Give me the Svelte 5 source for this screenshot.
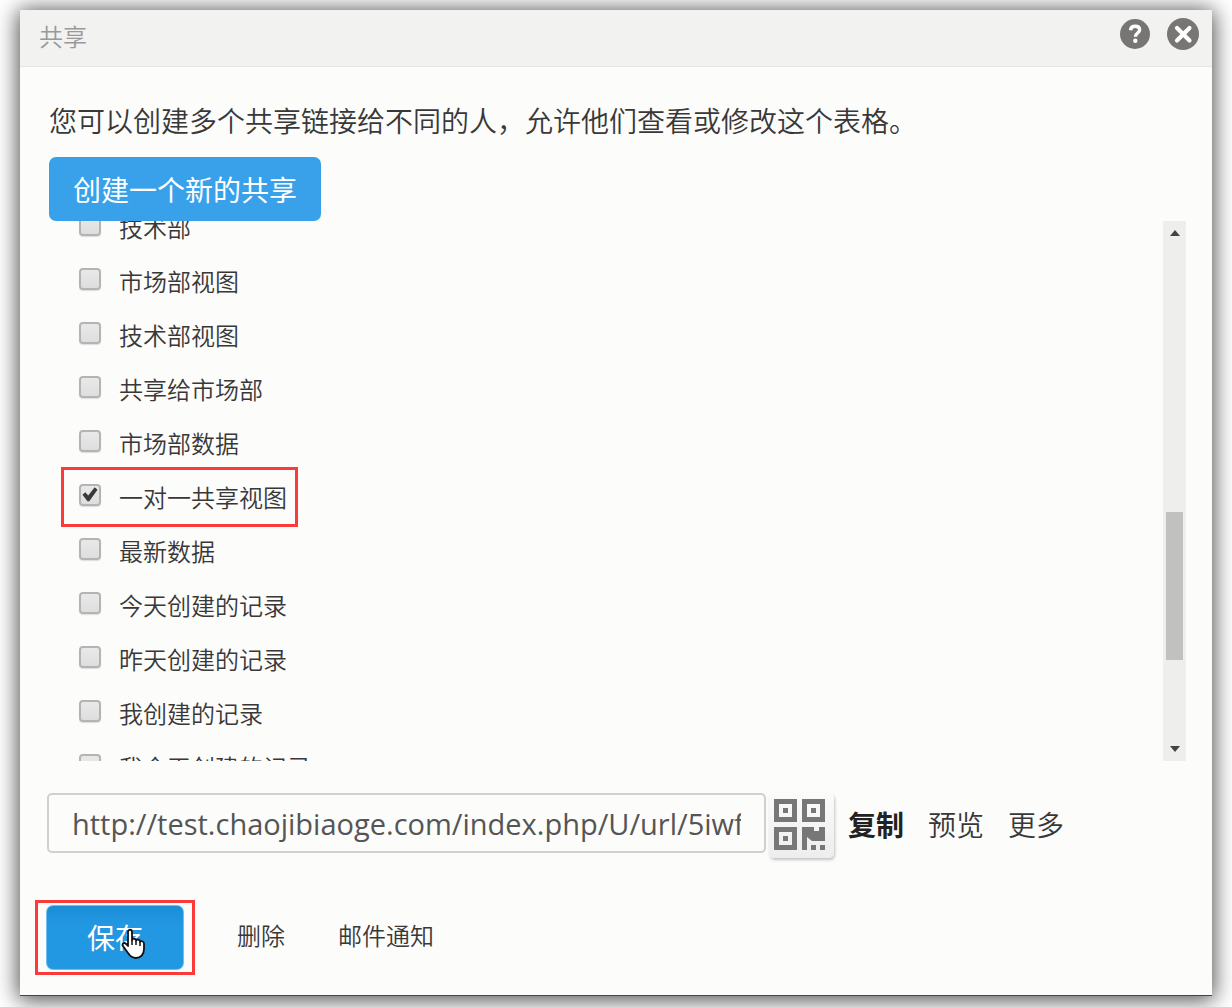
<script>
  let views = $state([
    { name: '技术部', checked: false },
    { name: '市场部视图', checked: false },
    { name: '技术部视图', checked: false },
    { name: '共享给市场部', checked: false },
    { name: '市场部数据', checked: false },
    { name: '一对一共享视图', checked: true, marked: true },
    { name: '最新数据', checked: false },
    { name: '今天创建的记录', checked: false },
    { name: '昨天创建的记录', checked: false },
    { name: '我创建的记录', checked: false },
    { name: '我今天创建的记录', checked: false }
  ]);
  let url = $state('http://test.chaojibiaoge.com/index.php/U/url/5iwf');
</script>

<main class="dialog">
  <header>
    <h1>共享</h1>
    <div class="tools">
      <button class="icon" aria-label="帮助">
        <svg width="30" height="30" viewBox="0 0 30 30">
          <circle cx="15" cy="15" r="15" fill="#777675" />
          <path d="M10.500 11.200c.3-2.700 2.100-3.900 4.600-3.900 2.700 0 4.500 1.400 4.500 3.600 0 3.200-4.100 3-4.200 6.800" fill="none" stroke="#fff" stroke-width="3.400" />
          <circle cx="15.300" cy="21.800" r="2.200" fill="#fff" />
        </svg>
      </button>
      <button class="icon" aria-label="关闭">
        <svg width="32" height="32" viewBox="0 0 32 32">
          <circle cx="16" cy="16" r="16" fill="#777675" />
          <path d="M10 10l12.500 12.500M22.500 10L10 22.500" fill="none" stroke="#fff" stroke-width="4.200" stroke-linecap="round" />
        </svg>
      </button>
    </div>
  </header>

  <section class="content">
    <p class="intro">您可以创建多个共享链接给不同的人，允许他们查看或修改这个表格。</p>
    <button class="primary create">创建一个新的共享</button>

    <div class="viewport">
      <ul>
        {#each views as view}
          <li>
            <label class:marked={view.marked}>
              <input type="checkbox" bind:checked={view.checked} />
              <span>{view.name}</span>
            </label>
          </li>
        {/each}
      </ul>
      <div class="scrollbar" aria-hidden="true">
        <svg width="10" height="6" viewBox="0 0 10 6"><path d="M0 6L5 0l5 6z" fill="#444" /></svg>
        <div class="track"><div class="thumb"></div></div>
        <svg width="10" height="6" viewBox="0 0 10 6"><path d="M0 0h10L5 6z" fill="#444" /></svg>
      </div>
    </div>

    <div class="link-row">
      <input class="url" type="text" aria-label="共享链接" bind:value={url} />
      <button class="qr" aria-label="二维码">
        <svg width="52" height="52" viewBox="0 0 52 52" fill="#777">
          <g fill="none" stroke="#777" stroke-width="5">
            <path d="M2.500 2.500h18v18h-18zM30.500 2.500h18v18h-18zM2.500 30.500h18v18h-18z" />
          </g>
          <path d="M9 9h5v5H9zM37 9h5v5h-5zM9 37h5v5H9zM28 28h12v4h5v-4h6v14H38l-5-4v13h-5zM37 46h5v5h-5zM46 46h5v5h-5z" />
        </svg>
      </button>
      <a href="#copy" class="copy">复制</a>
      <a href="#preview">预览</a>
      <a href="#more">更多</a>
    </div>

    <footer>
      <div class="save-wrap">
        <button class="primary save">保存</button>
        <svg class="pointer" width="24" height="32" viewBox="0 0 24 32">
          <path d="M7 18V4c0-3 4-3 4 0v8c1-2 4-1.500 4 .5 1-1.500 4-1 4 1.200 1.500-1.200 4 0 4 2V21c0 5-3 9-8 9-4 0-6-2-8-5l-5-7c-1.500-2 1-4 3-2.200z" fill="#fff" stroke="#111" stroke-width="1.800" stroke-linejoin="round" />
          <path d="M11 12v5M15 13v4M19 14v4" stroke="#111" stroke-width="1.500" />
        </svg>
      </div>
      <a href="#delete">删除</a>
      <a href="#mail">邮件通知</a>
    </footer>
  </section>
</main>

<style>
  :global(body) {
    background: #fff;
  }
  :global(#app) {
    display: flow-root;
  }
  .dialog {
    box-sizing: border-box;
    margin: 10px 20px 11px;
    background: #fcfcfb;
    border-bottom: 1px solid #444;
    border-radius: 2px 2px 0 0;
    box-shadow: 0 2px 22px 2px rgba(0, 0, 0, 0.7);
    color: #383838;
    font-family: "Noto Sans CJK SC", sans-serif;
    font-weight: 350;
  }
  header {
    display: flex;
    justify-content: space-between;
    align-items: center;
    box-sizing: border-box;
    height: 57px;
    padding: 0 13px 8px 19px;
    background: #f2f2f1;
    border-bottom: 1px solid #e4e4e3;
    border-radius: 2px 2px 0 0;
  }
  h1 {
    margin: 4px 0 0;
    font-size: 24px;
    line-height: 36px;
    font-weight: 350;
    color: #999;
  }
  .tools {
    display: flex;
    align-items: center;
    gap: 17px;
  }
  button {
    border: 0;
    padding: 0;
    background: none;
    font: inherit;
    cursor: pointer;
  }
  .icon,
  svg {
    display: block;
  }
  .content {
    padding: 33px 26px 25px;
  }
  .intro {
    margin: 0 3px 17px;
    font-size: 28px;
    line-height: 40px;
  }
  .primary {
    display: block;
    box-sizing: border-box;
    color: #fff;
    font-size: 28px;
    font-weight: 400;
    line-height: 40px;
    border-radius: 7px;
  }
  .create {
    margin-left: 3px;
    padding: 12px 24px;
    background: #38a1ea;
  }
  .viewport {
    display: flex;
    justify-content: space-between;
    height: 540px;
    overflow: hidden;
  }
  ul {
    list-style: none;
    margin: -21px 0 0 33px;
    padding: 0;
  }
  li {
    display: flex;
    align-items: center;
    height: 54px;
  }
  label {
    position: relative;
    display: flex;
    align-items: center;
    gap: 18px;
    font-size: 24px;
    line-height: 36px;
  }
  .marked::after {
    content: "";
    position: absolute;
    inset: -12px -11px -12px -18px;
    border: 3px solid #fb3a3a;
  }
  input[type="checkbox"] {
    appearance: none;
    flex: none;
    box-sizing: border-box;
    width: 22px;
    height: 22px;
    margin: 0 0 5px;
    border: 2px solid #b4b4b4;
    border-radius: 4px;
    background: linear-gradient(#e9e9e9, #dedede);
    box-shadow: 0 1px 1px #ddd;
  }
  input[type="checkbox"]:checked::before {
    content: "";
    display: block;
    width: 18px;
    height: 18px;
    background: #3a3a3a;
    clip-path: polygon(8% 52%, 24% 38%, 40% 56%, 76% 10%, 92% 24%, 46% 88%, 36% 88%);
  }
  .scrollbar {
    display: flex;
    flex-direction: column;
    align-items: center;
    box-sizing: border-box;
    width: 23px;
    padding: 9px 0;
    background: #eeeeed;
  }
  .track {
    flex: 1;
    padding-top: 276px;
  }
  .thumb {
    width: 17px;
    height: 148px;
    background: #c1c1c0;
  }
  .link-row {
    display: flex;
    align-items: center;
    margin-top: 32px;
    font-size: 28px;
    line-height: 40px;
  }
  .url {
    flex: 0 1 719px;
    min-width: 0;
    box-sizing: border-box;
    align-self: flex-start;
    height: 60px;
    margin-left: 1px;
    padding: 0 23px;
    border: 2px solid #d0d0d0;
    border-radius: 5px;
    background: #fcfcfb;
    color: #555;
    font-family: "Open Sans", sans-serif;
    font-weight: 400;
    font-size: 29px;
  }
  .qr {
    flex: none;
    box-sizing: border-box;
    width: 65px;
    height: 65px;
    margin: 0 14px 0 3px;
    padding: 4px 5px 6px;
    border-radius: 5px;
    background: linear-gradient(#fbfbfb, #ededed);
    box-shadow: 1px 2px 3px #c4c4c4;
  }
  a {
    color: #383838;
    text-decoration: none;
    white-space: nowrap;
  }
  .link-row a {
    padding-bottom: 4px;
  }
  .link-row a + a {
    margin-left: 24px;
  }
  .copy {
    font-weight: 700;
    color: #222;
  }
  footer {
    display: flex;
    align-items: center;
    gap: 53px;
    margin-top: 47px;
    font-size: 24px;
    line-height: 36px;
  }
  footer a {
    padding-bottom: 6px;
  }
  .save-wrap {
    position: relative;
  }
  .save-wrap::after {
    content: "";
    position: absolute;
    inset: -5px -11px;
    border: 3px solid #fb3a3a;
    pointer-events: none;
  }
  .save {
    width: 138px;
    height: 65px;
    padding-bottom: 2px;
    border: 1px solid #6fc0f0;
    background: linear-gradient(#1a8dd6, #2398e2 30%);
  }
  .pointer {
    position: absolute;
    left: 75px;
    top: 23px;
  }
</style>
